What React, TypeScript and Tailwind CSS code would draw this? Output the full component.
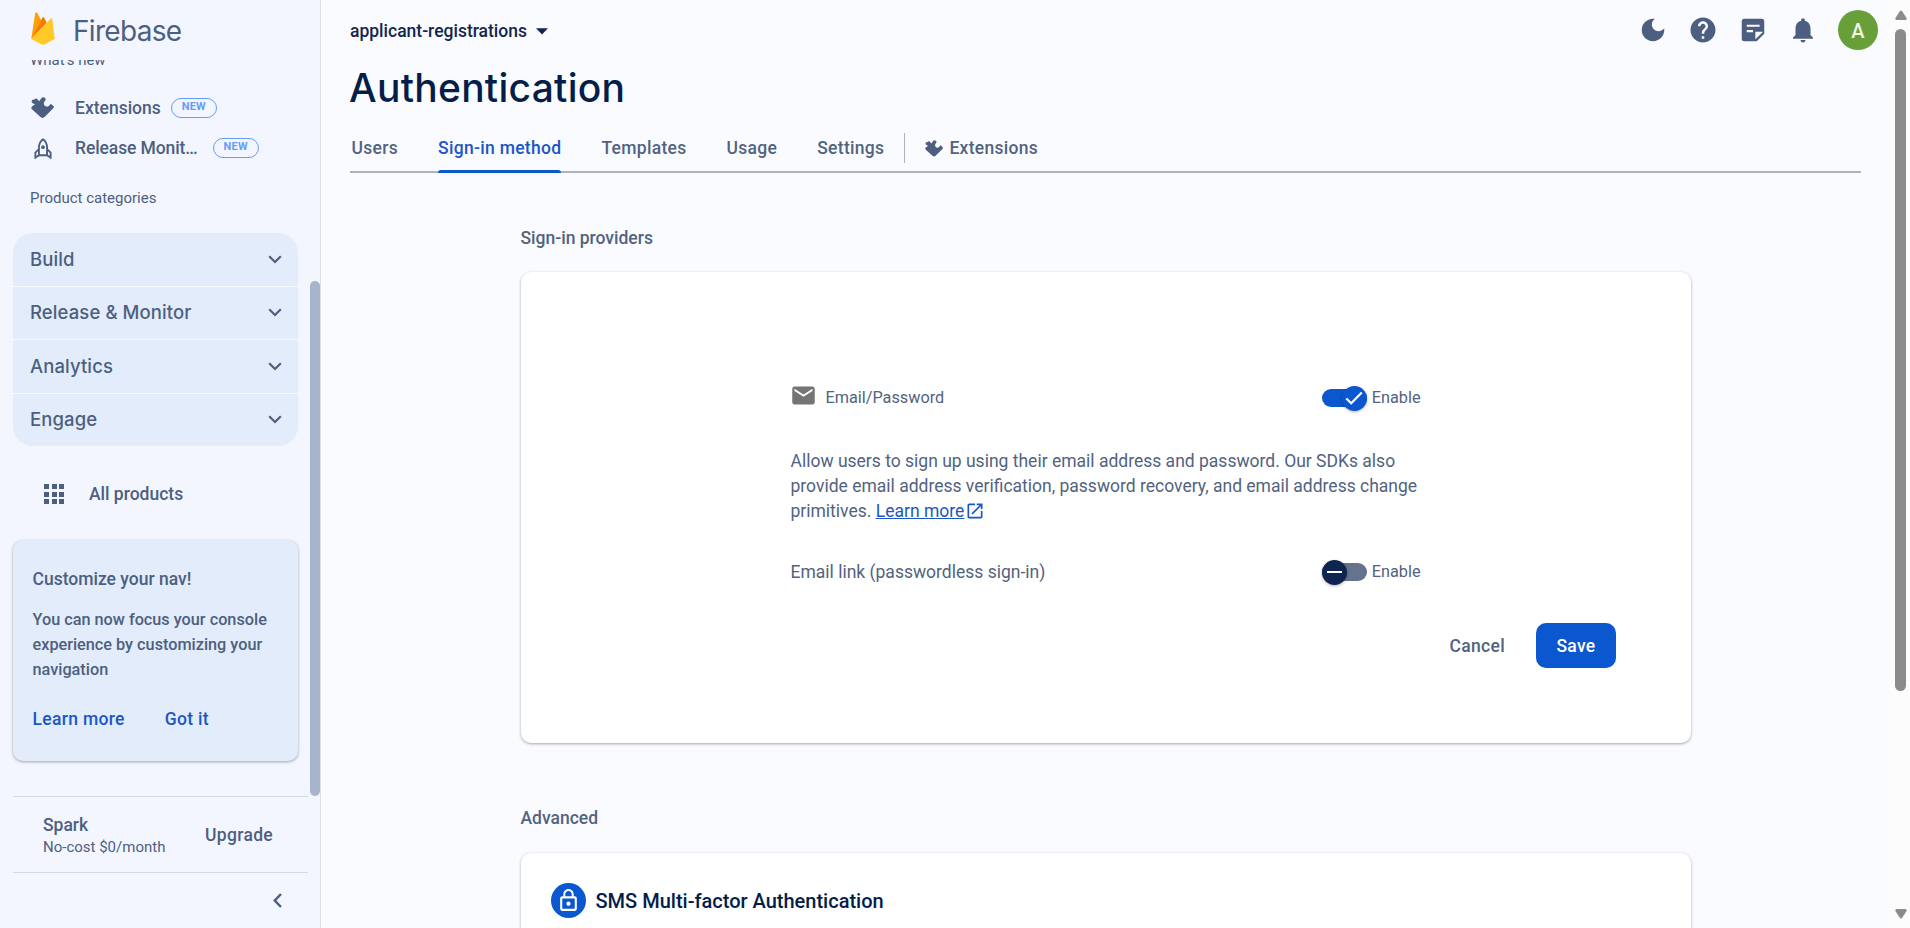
import type { ReactNode } from 'react';

const INK = 'text-[#4d5f80]';
const BODY = 'text-[#526380]';

function Puzzle({ className }: { className: string }) {
  return (
    <svg viewBox="0 0 70 65" className={className} fill="currentColor">
      <path d="M10 8Q13 2 18 5L25 13L31 4Q36 -2 43 3Q47 8 42 12Q37 19 41 26Q49 33 56 26L60 20L69 28Q71 31 67 35L42 60Q35 67 28 60L3 37Q-1 33 3 29L12 22L4 18Q0 13 4 9Q7 7 10 8Z" />
    </svg>
  );
}

function Rocket() {
  return (
    <svg viewBox="0 0 52 62" className="h-[21px] w-[18px]" fill="none" stroke="currentColor" strokeWidth="5.500">
      <path d="M26 4C17 11 14 19 14 28V51H38V28C38 19 35 11 26 4Z" />
      <path d="M14 33L3.500 43V58L14 51M38 33L48.500 43V58L38 51" />
      <circle cx="26" cy="27" r="5.500" fill="currentColor" stroke="none" />
    </svg>
  );
}

function FirebaseLogo() {
  return (
    <svg viewBox="0 0 70 98" className="h-[33px] w-[24px]">
      <path fill="#FFA000" d="M0 80L12 3C12.500 0 16 -.5 17.500 2L32 29Z" />
      <path fill="#F57C00" d="M0 80L33 17C34.500 14 37 14 38.500 17L46 32L0 80Z" />
      <path fill="#FFCA28" d="M0 80L58 19C60 17 62 18 62.300 20L70 80L39 96.500Q35 98.500 31 96.500Z" />
    </svg>
  );
}

function Md({ d, className }: { d: string; className: string }) {
  return (
    <svg viewBox="0 0 24 24" className={className} fill="currentColor">
      <path d={d} />
    </svg>
  );
}

const DARK = 'M12 3c-4.970 0-9 4.030-9 9s4.030 9 9 9 9-4.030 9-9c0-.46-.04-.92-.1-1.360-.98 1.370-2.580 2.260-4.400 2.260-2.980 0-5.400-2.420-5.400-5.400 0-1.810.89-3.420 2.260-4.400-.44-.06-.9-.1-1.360-.1z';
const HELP = 'M12 2C6.480 2 2 6.480 2 12s4.480 10 10 10 10-4.480 10-10S17.520 2 12 2zm1 17h-2v-2h2v2zm2.070-7.750l-.9.920C13.450 12.900 13 13.500 13 15h-2v-.5c0-1.100.45-2.100 1.170-2.830l1.240-1.260c.37-.36.59-.86.59-1.410 0-1.100-.9-2-2-2s-2 .9-2 2H8c0-2.210 1.790-4 4-4s4 1.790 4 4c0 .88-.36 1.680-.93 2.250z';
const BELL = 'M12 22c1.100 0 2-.9 2-2h-4c0 1.100.89 2 2 2zm6-6v-5c0-3.070-1.640-5.640-4.500-6.320V4c0-.83-.67-1.500-1.500-1.500s-1.500.67-1.500 1.500v.68C7.630 5.360 6 7.920 6 11v5l-2 2v1h16v-1l-2-2z';
const MAIL = 'M20 4H4c-1.100 0-1.990.9-1.990 2L2 18c0 1.100.9 2 2 2h16c1.100 0 2-.9 2-2V6c0-1.100-.9-2-2-2zm0 4l-8 5-8-5V6l8 5 8-5v2z';
const OPEN = 'M19 19H5V5h7V3H5c-1.110 0-2 .9-2 2v14c0 1.100.89 2 2 2h14c1.100 0 2-.9 2-2v-7h-2v7zM14 3v2h3.590l-9.830 9.830 1.410 1.410L19 6.410V10h2V3h-7z';
const LOCK = 'M12 17c1.100 0 2-.9 2-2s-.9-2-2-2-2 .9-2 2 .9 2 2 2zm6-9h-1V6c0-2.760-2.240-5-5-5S7 3.240 7 6v2H6c-1.100 0-2 .9-2 2v10c0 1.100.9 2 2 2h12c1.100 0 2-.9 2-2V10c0-1.100-.9-2-2-2zM8.900 6c0-1.710 1.390-3.100 3.100-3.100s3.100 1.390 3.100 3.100v2H8.900V6zM18 20H6V10h12v10z';

function NewChip() {
  return (
    <span className="flex h-5 w-[46px] items-center justify-center rounded-full border border-[#669df6] pb-px text-[11px] font-bold tracking-[0.2px] text-[#669df6]">
      NEW
    </span>
  );
}

function NavRow({ icon, label, gap }: { icon: ReactNode; label: string; gap: string }) {
  return (
    <div className="flex h-10 items-center pl-[31px]">
      <span className="flex w-[23px] justify-center">{icon}</span>
      <span className={`ml-[21px] pt-px text-[17.5px] font-medium ${gap}`}>{label}</span>
      <NewChip />
    </div>
  );
}

const CATEGORIES = [
  { name: 'Build', box: 'h-[54px] border-b border-white/70' },
  { name: 'Release & Monitor', box: 'h-[53px] border-b border-white/70' },
  { name: 'Analytics', box: 'h-[54px] border-b border-white/70' },
  { name: 'Engage', box: 'h-[52px]' },
];

function Sidebar() {
  return (
    <aside className={`relative flex h-full w-[321px] shrink-0 flex-col border-r border-[#dadfe8] bg-[#f3f6fe] ${INK}`}>
      <header className="flex h-[60px] shrink-0 items-start pl-[31px] pt-3">
        <FirebaseLogo />
        <span className="ml-[18px] mt-px font-[Inter,sans-serif] text-[28px] leading-[36px] tracking-[-0.7px]">Firebase</span>
      </header>
      <div className="h-[736px] shrink-0 overflow-hidden">
        <div className="-mt-[10px] h-5 pl-[30px] text-[15px] leading-5">What's new</div>
        <div className="mt-[18px]">
          <NavRow icon={<Puzzle className="h-[21.500px] w-[23px]" />} label="Extensions" gap="mr-[10px]" />
          <NavRow icon={<Rocket />} label="Release Monit…" gap="mr-[15px] tracking-[-0.1px]" />
        </div>
        <div className="mt-[20px] pl-[30px] text-[15px] leading-5">Product categories</div>
        <div className="ml-[13px] mt-[25px] w-[285px] overflow-hidden rounded-[20px] bg-[#e2ecfb]">
          {CATEGORIES.map((c) => (
            <div key={c.name} className={`flex items-center justify-between pl-[17px] pr-4 font-[Inter,sans-serif] text-[18.500px] font-medium tracking-[0.1px] ${c.box}`}>
              {c.name}
              <svg viewBox="0 0 14 9" className="mb-px h-[9px] w-[14px]" fill="none" stroke="currentColor" strokeWidth="2.200">
                <path d="M1.200 1.200L7 7L12.800 1.200" />
              </svg>
            </div>
          ))}
        </div>
        <div className="mt-7 flex h-10 items-center pl-11">
          <span className="grid grid-cols-3 gap-[2.500px]">
            {[0, 1, 2, 3, 4, 5, 6, 7, 8].map((i) => (
              <i key={i} className="size-[5px] bg-[#4d5f80]" />
            ))}
          </span>
          <span className="ml-[25px] text-[17.5px] font-medium">All products</span>
        </div>
        <div className="ml-[13px] mt-[26px] h-[221px] w-[285px] rounded-[10px] bg-[#e2ecfb] px-[19.500px] pt-[27px] shadow-[0_1px_3px_rgba(60,64,67,0.45)]">
          <div className="text-[17.5px] font-medium leading-[25px]">Customize your nav!</div>
          <p className="mt-[15px] text-[16.25px] font-medium leading-[25px]">You can now focus your console experience by customizing your navigation</p>
          <div className="mt-[25px] flex gap-10 text-[17.5px] font-medium leading-[25px] tracking-[0.3125px] text-[#1a57c4]">
            <a>Learn more</a>
            <a>Got it</a>
          </div>
        </div>
      </div>
      <div className="ml-[13px] flex h-[77px] w-[295px] shrink-0 items-center justify-between border-y border-[#d3dae6] pl-[30px] pr-[35px] pt-px">
        <div>
          <div className="text-[17.5px] font-medium leading-[23px]">Spark</div>
          <div className="text-[15px] leading-5">No-cost $0/month</div>
        </div>
        <span className="pt-px text-[17.5px] font-medium tracking-[0.3125px]">Upgrade</span>
      </div>
      <div className="flex flex-1 items-center justify-end pr-[38px]">
        <svg viewBox="0 0 9 15" className="h-[15px] w-[9px]" fill="none" stroke="currentColor" strokeWidth="2.500">
          <path d="M8 1L1.800 7.500L8 14" />
        </svg>
      </div>
      <div className="absolute left-[310px] top-[281px] h-[515px] w-[10px] rounded-full bg-[#a8b4cb]" />
    </aside>
  );
}

function Toggle({ on }: { on: boolean }) {
  return (
    <div className="flex items-center">
      <span className={`flex h-[18px] w-[45px] items-center rounded-full ${on ? 'justify-end bg-[#0b57d0]' : 'bg-[#64748f]'}`}>
        <span className={`flex size-[25px] shrink-0 items-center justify-center rounded-full shadow-[0_1px_3px_rgba(0,0,0,0.3)] ${on ? 'bg-[#0b57d0]' : 'bg-[#0e2550]'}`}>
          {on ? (
            <svg viewBox="0 0 18 14" className="h-[14px] w-[18px]" fill="none" stroke="white" strokeWidth="2.200">
              <path d="M1.300 7.500L6.200 12.200L16.800 1.500" />
            </svg>
          ) : (
            <span className="h-[2px] w-[15px] bg-white" />
          )}
        </span>
      </span>
      <span className="ml-[5px] text-[16.25px]">Enable</span>
    </div>
  );
}

const TABS = ['Users', 'Sign-in method', 'Templates', 'Usage', 'Settings'];

function Tabs() {
  return (
    <nav className={`flex h-[49px] shrink-0 items-stretch border-b-2 border-[#adb4be] pl-[1.500px] text-[17.5px] font-medium tracking-[0.3px] ${BODY}`}>
      <div className="flex gap-10">
        {TABS.map((t) =>
          t === 'Sign-in method' ? (
            <span key={t} className="relative flex items-center pt-[2px] text-[#1a57c4]">
              {t}
              <i className="absolute inset-x-0 -bottom-[2px] h-[3px] rounded-t-sm bg-[#0b57d0]" />
            </span>
          ) : (
            <span key={t} className="flex items-center pt-[2px]">{t}</span>
          ),
        )}
      </div>
      <i className="ml-5 h-[30px] w-px self-center bg-[#adb4be]" />
      <span className="ml-5 flex items-center pt-[2px]">
        <Puzzle className="mb-px mr-[6px] h-[17px] w-[18px] text-[#4d5f80]" />
        Extensions
      </span>
    </nav>
  );
}

function TopBar() {
  return (
    <header className="-mr-[17px] flex h-[60px] shrink-0 items-center justify-between">
      <span className="flex items-center gap-[9px] pt-[2px] text-[17.5px] font-medium text-[#13264d]">
        applicant-registrations
        <svg viewBox="0 0 12 7" className="h-[7px] w-[12px]" fill="currentColor">
          <path d="M0 .3H12L6 6.500Z" />
        </svg>
      </span>
      <div className={`flex items-center gap-5 ${INK}`}>
        <Md d={DARK} className="size-[30px]" />
        <Md d={HELP} className="size-[30px]" />
        <svg viewBox="0 0 24 24" className="size-[30px]">
          <path fill="currentColor" d="M5 3h14a2 2 0 0 1 2 2v10l-6 6H5a2 2 0 0 1-2-2V5a2 2 0 0 1 2-2z" />
          <path fill="#fafbff" d="M7 7.700h10.300v1.700H7zM7 12h5v1.700H7zM13.900 13.400h6.200l-6.200 6z" />
        </svg>
        <Md d={BELL} className="size-[30px]" />
        <span className="flex size-10 items-center justify-center rounded-full bg-[#689f38] pt-[2px] text-[20px] font-medium text-[#eef5e6]">A</span>
      </div>
    </header>
  );
}

const CARD = 'bg-white shadow-[0_1px_3px_rgba(60,64,67,0.45)]';

function Main() {
  return (
    <main className="flex h-full min-w-0 flex-1 flex-col overflow-hidden bg-[#fafbff] px-[29px]">
      <TopBar />
      <h1 className="-ml-px mb-[11px] mt-[3px] shrink-0 font-[Inter,sans-serif] text-[39px] font-medium leading-[50px] tracking-[0.270px] text-[#041e49]">
        Authentication
      </h1>
      <Tabs />
      <div className={`ml-[170.500px] mr-[170px] shrink-0 ${BODY}`}>
        <h2 className="mt-[53px] text-[17.5px] font-medium leading-6">Sign-in providers</h2>
        <section className={`mt-[22px] h-[471px] rounded-[10px] pl-[270px] pt-[111px] ${CARD}`}>
          <div className="w-[630px]">
            <div className="flex h-[30px] items-center justify-between">
              <span className="flex items-center gap-[9px] text-[16.25px]">
                <Md d={MAIL} className="-ml-px mb-[5px] size-[27px] text-[#757575]" />
                Email/Password
              </span>
              <Toggle on />
            </div>
            <p className="mt-9 text-[17.5px] leading-[25px]">
              Allow users to sign up using their email address and password. Our SDKs also
              <br />
              provide email address verification, password recovery, and email address change
              <br />
              primitives.{' '}
              <a className="text-[#1a57c4]">
                <span className="underline">Learn more</span>
                <Md d={OPEN} className="mb-[2px] ml-px inline size-[20px]" />
              </a>
            </p>
            <div className="mt-[33px] flex h-[30px] items-center justify-between text-[17.5px]">
              Email link (passwordless sign-in)
              <Toggle on={false} />
            </div>
          </div>
          <div className="mr-[75px] mt-9 flex items-center justify-end gap-[31px] text-[17.5px] font-medium tracking-[0.3125px]">
            <span className="pt-[2px]">Cancel</span>
            <span className="flex h-[45px] w-20 items-center justify-center rounded-[10px] bg-[#0b57d0] pt-[2px] text-white">Save</span>
          </div>
        </section>
        <h2 className="mt-[63px] text-[17.5px] font-medium leading-6">Advanced</h2>
        <section className={`mt-[23px] h-[200px] rounded-[10px] pl-[30px] pt-[30px] ${CARD}`}>
          <div className="flex items-center gap-[10px] text-[20px] font-medium text-[#041e49]">
            <span className="flex size-[35px] items-center justify-center rounded-full bg-[#0b57d0] pb-px text-white">
              <Md d={LOCK} className="size-[25px]" />
            </span>
            SMS Multi-factor Authentication
          </div>
        </section>
      </div>
    </main>
  );
}

function PageScrollbar() {
  return (
    <div className="flex h-full w-5 shrink-0 flex-col items-center bg-[#fcfcfc] pl-px pt-[10px]">
      <svg viewBox="0 0 12 10" className="h-[10px] w-[12px] shrink-0" fill="#8b8b8b">
        <path d="M5 1Q6 0 7 1L11.600 8Q12 10 10.500 10H1.500Q0 10 .4 8Z" />
      </svg>
      <div className="mt-[9px] h-[662px] w-[11px] shrink-0 rounded-full bg-[#8b8b8b]" />
      <svg viewBox="0 0 12 10" className="mt-[218px] h-[10px] w-[12px] shrink-0" fill="#8b8b8b">
        <path d="M5 9Q6 10 7 9L11.600 2Q12 0 10.500 0H1.500Q0 0 .4 2Z" />
      </svg>
    </div>
  );
}

export default function App() {
  return (
    <div className="flex h-[928px] w-[1910px] overflow-hidden font-[Roboto,sans-serif]">
      <Sidebar />
      <Main />
      <PageScrollbar />
    </div>
  );
}
